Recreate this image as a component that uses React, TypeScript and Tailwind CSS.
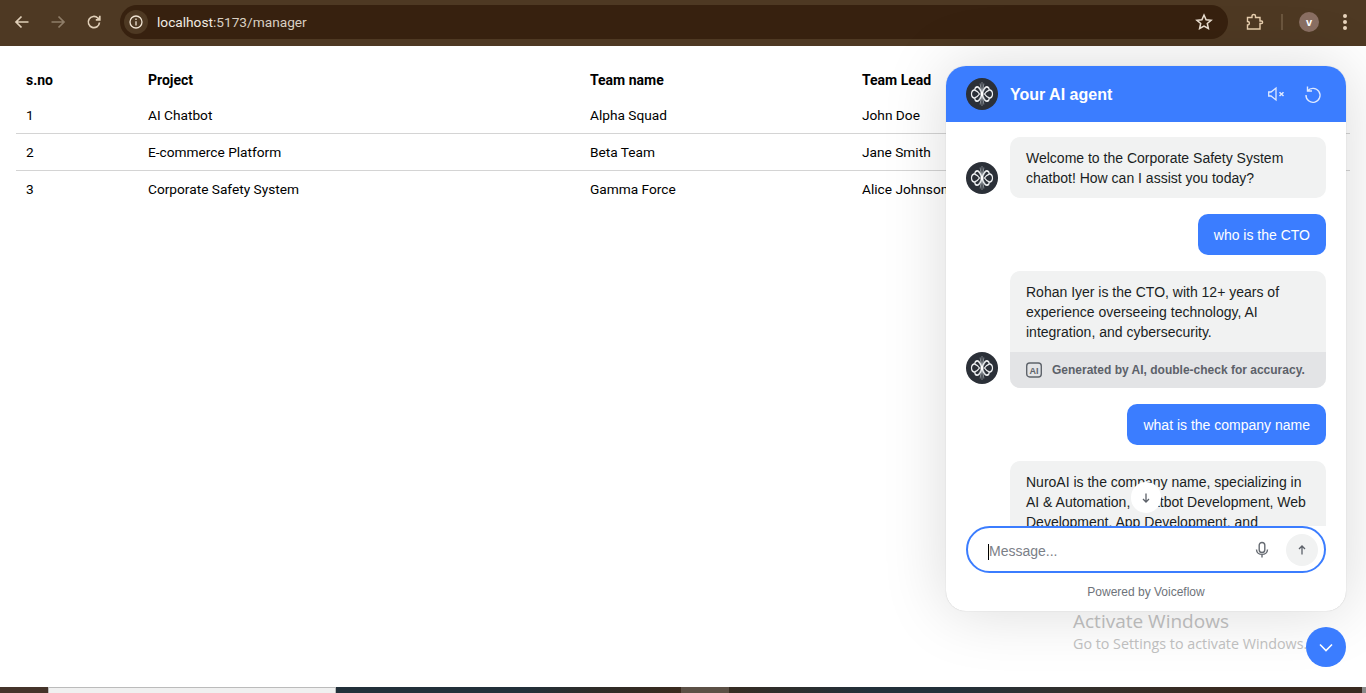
import React from "react";

const Logo = () => (
  <div className="w-8 h-8 rounded-full bg-[#2b3038] flex items-center justify-center shrink-0">
    <svg width="24" height="24" viewBox="1 4 24 16" preserveAspectRatio="none" fill="none" stroke="#eef0f2" strokeWidth="1.200">
      <path d="M13 4V20M11 5L15 19M15 5L11 19M9.500 8L16.500 16M16.500 8L9.500 16" stroke="#9aa0a6" strokeWidth="0.700" />
      <path d="M13 12C11.500 8.500 10 7 8 7.200C6.500 7.400 5.800 8.300 5.800 9.200C3.500 9.400 2.500 10.700 2.500 12C2.500 13.300 3.500 14.600 5.800 14.800C5.800 15.700 6.500 16.600 8 16.800C10 17 11.500 15.500 13 12Z" />
      <path d="M13 12C14.500 8.500 16 7 18 7.200C19.500 7.400 20.200 8.300 20.200 9.200C22.500 9.400 23.500 10.700 23.500 12C23.500 13.300 22.500 14.600 20.200 14.800C20.200 15.700 19.500 16.600 18 16.800C16 17 14.500 15.500 13 12Z" />
      <path d="M6 9.500C8 10 9.500 11 10.500 12C9.500 13 8 14 6 14.500M20 9.500C18 10 16.500 11 15.500 12C16.500 13 18 14 20 14.500" strokeWidth="0.900" />
      <circle cx="13" cy="12" r="1.600" fill="#ffffff" stroke="none" />
    </svg>
  </div>
);

const Bubble = ({ children }: { children: React.ReactNode }) => (
  <div className="bg-[#f1f2f2] rounded-[10px] px-4 py-[10.5px] w-[316px] text-[14px] leading-5 text-[#1a1e23]">{children}</div>
);

const UserBubble = ({ children }: { children: React.ReactNode }) => (
  <div className="self-end bg-[#3b7dff] rounded-[10px] px-4 py-[10.5px] text-[14px] leading-5 text-white">{children}</div>
);

const rows = [
  { c: ["1", "AI Chatbot", "Alpha Squad", "John Doe"], h: "h-[36px] border-b border-[#d4d4d4]" },
  { c: ["2", "E-commerce Platform", "Beta Team", "Jane Smith"], h: "h-[37px] border-b border-[#d4d4d4]" },
  { c: ["3", "Corporate Safety System", "Gamma Force", "Alice Johnson"], h: "h-[37px]" },
];

export default function App() {
  return (
    <div className="relative h-[693px] w-[1366px] overflow-hidden bg-white flex flex-col font-['Roboto',sans-serif]">
      {/* Browser bar */}
      <div className="h-[46px] bg-[#4e3923] flex items-center shrink-0 pl-[13px] pr-[19px] pb-[2px] text-[#e6d5bf]">
        <svg width="18" height="18" viewBox="0 0 18 18" fill="none" stroke="#e0cfb8" strokeWidth="1.700"><path d="M15.500 9H3M8.500 3.500L3 9l5.500 5.500" /></svg>
        <svg className="ml-[18px]" width="18" height="18" viewBox="0 0 18 18" fill="none" stroke="#8f7d68" strokeWidth="1.700"><path d="M2.500 9H15M9.500 3.500L15 9l-5.500 5.500" /></svg>
        <svg className="ml-[18px]" width="18" height="18" viewBox="0 0 18 18" fill="none" stroke="#e0cfb8" strokeWidth="1.700"><path d="M14.500 9.500A5.600 5.600 0 1 1 12.800 5L14.500 6.500M14.800 2.800V6.800H10.800" /></svg>
        <div className="ml-[17px] w-[1108px] h-[34px] rounded-full bg-[#37210f] flex items-center pl-[4px] pr-[15px] shrink-0">
          <div className="w-[24px] h-[24px] rounded-full bg-[#4e3923] flex items-center justify-center">
            <svg width="16" height="16" viewBox="0 0 16 16" fill="none" stroke="#f0e4d4" strokeWidth="1.300"><circle cx="8" cy="8" r="6" /><path d="M8 7.200V11.500M8 4.500V6" /></svg>
          </div>
          <div className="ml-[9px] text-[13.700px] text-[#d9cfc2]"><span className="text-[#f2ebe2]">localhost</span>:5173/manager</div>
          <svg className="ml-auto" width="18" height="18" viewBox="0 0 18 18" fill="none" stroke="#ece0d2" strokeWidth="1.500"><path d="M9 2l2.100 4.700 5 .5-3.800 3.300 1.100 5L9 13l-4.400 2.500 1.100-5L1.900 7.200l5-.5z" /></svg>
        </div>
        <svg className="ml-[18px]" width="18" height="18" viewBox="0 0 18 18" fill="none" stroke="#e8cfae" strokeWidth="1.400"><path d="M1.500 4.500H6V3C6 1 9.500 1 9.500 3V4.500H14V8H15.500C17 8 17 10.500 15.500 10.500H14V16H1.500V12C4 12 4 8.500 1.500 8.500Z" /></svg>
        <div className="ml-[17px] w-[2px] h-[16px] bg-[#6b563e]" />
        <div className="ml-[16px] w-5 h-5 rounded-full bg-[#8a6f63] flex items-center justify-center text-[11px] text-white font-['Liberation_Sans',sans-serif] font-bold">v</div>
        <div className="ml-[24px] flex flex-col gap-[2px]">
          <div className="w-[4px] h-[4px] rounded-full bg-[#e8d5bd]" />
          <div className="w-[4px] h-[4px] rounded-full bg-[#e8d5bd]" />
          <div className="w-[4px] h-[4px] rounded-full bg-[#e8d5bd]" />
        </div>
      </div>

      {/* Page */}
      <div className="flex-1 pt-[16px] px-4 text-[13.700px] text-black">
        <div className="w-[1334px]">
          <div className="grid grid-cols-[132px_442px_272px_1fr] h-[36px] items-center font-bold text-[14px]">
            <div className="pl-[10px]">s.no</div>
            <div>Project</div>
            <div>Team name</div>
            <div>Team Lead</div>
          </div>
          {rows.map((r) => (
            <div key={r.c[0]} className={"grid grid-cols-[132px_442px_272px_1fr] items-center " + r.h}>
              <div className="pl-[10px]">{r.c[0]}</div>
              <div>{r.c[1]}</div>
              <div>{r.c[2]}</div>
              <div>{r.c[3]}</div>
            </div>
          ))}
        </div>
      </div>

      {/* Taskbar strip */}
      <div className="h-[6px] shrink-0 flex">
        <div className="w-[48px] bg-[#45342a]" />
        <div className="w-[288px] bg-[#f0f0f0] border-t border-x border-[#bbbbbb]" />
        <div className="w-[345px] bg-[linear-gradient(90deg,#22303a,#22303a_55%,#2e2c28_75%,#3a2a1e)]" />
        <div className="w-[48px] bg-[#5c5046]" />
        <div className="w-[633px] bg-[linear-gradient(90deg,#362c22,#22303a_22%,#22303a_35%,#33302c_55%,#3a2a20_80%,#3a2a20)]" />
        <div className="flex-1 bg-[#8a8a8a]" />
      </div>

      {/* Activate Windows */}
      <div className="absolute left-[1073px] top-[608px] text-[#c2c2c2] font-['Open_Sans',sans-serif]">
        <div className="text-[19px] leading-[26px]">Activate Windows</div>
        <div className="text-[14.300px] leading-[20px] whitespace-nowrap">Go to Settings to activate Windows.</div>
      </div>

      {/* Chat widget */}
      <div className="absolute left-[946px] top-[66px] w-[400px] h-[545px] bg-white rounded-[20px] overflow-hidden flex flex-col shadow-[0_0_1px_rgba(0,0,0,0.25),0_0_64px_rgba(0,0,0,0.15)] font-['Liberation_Sans',sans-serif]">
        <div className="h-[56px] bg-[#3b7dff] flex items-center pl-5 pr-[23px] shrink-0">
          <Logo />
          <div className="ml-3 mt-[1px] text-[16px] font-bold text-white">Your AI agent</div>
          <svg className="ml-auto" width="18" height="18" viewBox="0 0 18 18" fill="none" stroke="#dfe9ff" strokeWidth="1.300"><path d="M0.700 7V11H3L8 15V3L3 7Z" /><path d="M11.500 7.200L15.500 11M15.500 7.200L11.500 11" strokeWidth="1.500" /></svg>
          <svg className="ml-[17px]" width="20" height="20" viewBox="0 0 20 20" fill="none" stroke="#dfe9ff" strokeWidth="1.400"><path d="M4.500 2.500V7H9M4.500 7A7 7 0 1 1 3 11" /></svg>
        </div>

        <div className="relative flex-1 min-h-0">
          <div className="h-full overflow-hidden pt-[15px] px-5 flex flex-col gap-4">
            <div className="flex items-end gap-3 shrink-0">
              <div className="mb-[4px]"><Logo /></div>
              <Bubble>Welcome to the Corporate Safety System chatbot! How can I assist you today?</Bubble>
            </div>
            <UserBubble>who is the CTO</UserBubble>
            <div className="flex items-end gap-3 shrink-0">
              <div className="mb-[4px]"><Logo /></div>
              <div className="w-[316px] rounded-[10px] overflow-hidden bg-[#f1f2f2] text-[14px] leading-5 text-[#1a1e23]">
                <div className="px-4 pt-[11px] pb-[10px]">Rohan Iyer is the CTO, with 12+ years of experience overseeing technology, AI integration, and cybersecurity.</div>
                <div className="h-[36px] bg-[#e3e4e6] flex items-center px-4 text-[12px] font-bold text-[#5c6169]">
                  <svg width="16" height="16" viewBox="0 0 16 16" fill="none"><rect x="0.700" y="1" width="14.600" height="14" rx="3" stroke="#5f646b" strokeWidth="1.400" /><text x="8" y="11.700" textAnchor="middle" fontSize="9" fontWeight="700" fill="#5f646b" fontFamily="Liberation Sans">AI</text></svg>
                  <span className="ml-[10px] whitespace-nowrap">Generated by AI, double-check for accuracy.</span>
                </div>
              </div>
            </div>
            <UserBubble>what is the company name</UserBubble>
            <div className="pl-[44px] shrink-0">
              <div className="bg-[#f1f2f2] rounded-[10px] px-4 pt-[11px] pb-[10px] w-[316px] text-[14px] leading-5 text-[#1a1e23]">NuroAI is the company name, specializing in AI &amp; Automation, Chatbot Development, Web Development, App Development, and Cybersecurity services.</div>
            </div>
          </div>
          <div className="absolute left-[185px] top-[360px] w-[30px] h-[31px] rounded-full bg-white flex items-center justify-center">
            <svg width="14" height="14" viewBox="0 0 14 14" fill="none" stroke="#5c6169" strokeWidth="1.300"><path d="M7 2.500V11M4 8L7 11L10 8" /></svg>
          </div>
        </div>

        <div className="shrink-0 px-5">
          <div className="h-[47px] rounded-full border-2 border-[#3b7dff] bg-white flex items-center pl-5 pr-[6px]">
            <div className="w-px h-[16px] bg-black mt-[4px]" />
            <span className="text-[14px] text-[#7b8087] mt-[4px]">Message...</span>
            <svg className="ml-auto" width="18" height="18" viewBox="0 0 18 18" fill="none" stroke="#666b72" strokeWidth="1.400"><rect x="6.200" y="1.500" width="5.600" height="10" rx="2.800" /><path d="M3.500 8.500C3.500 15 14.500 15 14.500 8.500M9 13V16.500" /></svg>
            <div className="ml-[15px] w-8 h-8 rounded-full bg-[#f1f2f2] flex items-center justify-center">
              <svg width="14" height="14" viewBox="0 0 14 14" fill="none" stroke="#5c6169" strokeWidth="1.300"><path d="M7 11.500V3M4 6L7 3L10 6" /></svg>
            </div>
          </div>
          <div className="h-[38px] flex items-center justify-center text-[12px] text-[#6e737a]">Powered by Voiceflow</div>
        </div>
      </div>

      {/* Launcher */}
      <div className="absolute left-[1306px] top-[627px] w-10 h-10 rounded-full bg-[#3b7dff] flex items-center justify-center">
        <svg width="18" height="18" viewBox="0 0 18 18" fill="none" stroke="white" strokeWidth="1.600"><path d="M3 6.500L9 12.500L15 6.500" /></svg>
      </div>
    </div>
  );
}
